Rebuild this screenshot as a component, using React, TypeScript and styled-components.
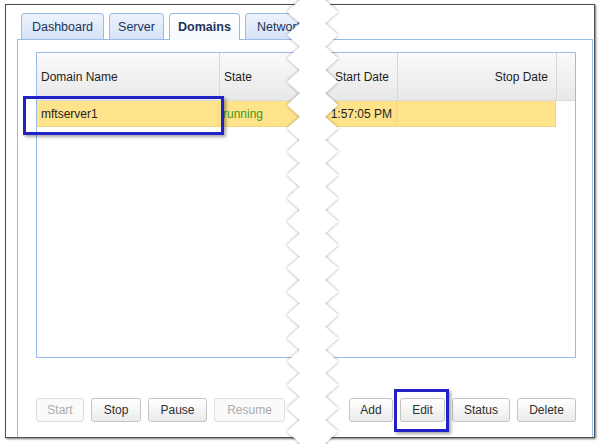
import React from "react";
import styled, { createGlobalStyle } from "styled-components";

const GlobalStyle = createGlobalStyle`
  html, body {
    margin: 0;
    padding: 0;
    background: #ffffff;
    font-family: "Liberation Sans", Arial, sans-serif;
  }
`;

const Page = styled.div`
  position: relative;
  width: 600px;
  height: 444px;
  overflow: hidden;
  background: #ffffff;
`;

const Frame = styled.div`
  box-sizing: border-box;
  width: 590px;
  height: 434px;
  margin: 4px 0 0 5px;
  padding: 8px 1px 0 11px;
  border: 1px solid #4f4f4f;
  box-shadow: 1px 1px 2px rgba(0, 0, 0, 0.55);
  display: flex;
  flex-direction: column;
  background: #ffffff;
`;

const TabStrip = styled.div`
  display: flex;
  align-items: flex-end;
  gap: 5px;
  height: 26px;
  padding-left: 4px;
`;

const Tab = styled.div<{ active?: boolean; w: number }>`
  box-sizing: border-box;
  width: ${(p) => p.w}px;
  height: ${(p) => (p.active ? "27px" : "26px")};
  margin-bottom: ${(p) => (p.active ? "-1px" : "0")};
  padding-bottom: ${(p) => (p.active ? "1px" : "0")};
  display: flex;
  align-items: center;
  justify-content: center;
  border: 1px solid #99bbe8;
  border-bottom: none;
  border-radius: 4px 4px 0 0;
  background: ${(p) =>
    p.active
      ? "linear-gradient(#ffffff, #f6f9fe)"
      : "linear-gradient(#edf3fc, #d4e3f7)"};
  color: #1d3359;
  font-size: 12.5px;
  font-weight: ${(p) => (p.active ? "bold" : "normal")};
  white-space: nowrap;
  overflow: hidden;
  position: relative;
  z-index: ${(p) => (p.active ? 1 : 0)};
`;

const Panel = styled.div`
  flex: 1;
  border: 1px solid #99bbe8;
  border-bottom: none;
  padding: 12px 16px 0 18px;
  display: flex;
  flex-direction: column;
`;

const Grid = styled.div`
  box-sizing: border-box;
  height: 306px;
  border: 1px solid #99bbe8;
  display: flex;
  flex-direction: column;
  font-size: 12px;
  color: #1e1e1e;
`;

const HeaderRow = styled.div`
  display: grid;
  grid-template-columns: 182px 100px 78px 159px 1fr;
  height: 48px;
  background: linear-gradient(#fafafa, #e8e8e8);
  border-bottom: 1px solid #dcdcdc;
  box-sizing: border-box;
`;

const HeaderCell = styled.div<{ right?: boolean; first?: boolean }>`
  display: flex;
  align-items: center;
  justify-content: ${(p) => (p.right ? "flex-end" : "flex-start")};
  padding: 1px ${(p) => (p.right ? "8px" : "4px")} 0 4px;
  border-left: ${(p) => (p.first ? "none" : "1px solid #d8d8d8")};
  white-space: nowrap;
`;

const DataRow = styled.div`
  display: grid;
  grid-template-columns: 182px 100px 78px 159px;
  height: 26px;
  box-sizing: border-box;
  width: 519px;
  background: #fee38b;
  border-bottom: 1px dotted #e9cf74;
`;

const DataCell = styled.div<{ right?: boolean; green?: boolean }>`
  display: flex;
  align-items: center;
  justify-content: ${(p) => (p.right ? "flex-end" : "flex-start")};
  padding: 1px 4px 0 4px;
  border-right: 1px dotted #e6cc78;
  color: ${(p) => (p.green ? "#3b9a1e" : "#1e1e1e")};
  white-space: nowrap;
  overflow: hidden;
`;

const ButtonBar = styled.div`
  display: flex;
  justify-content: space-between;
  margin-top: 40px;
`;

const ButtonGroup = styled.div`
  display: flex;
  gap: 7px;
`;

const Button = styled.div<{ w: number; disabled?: boolean }>`
  box-sizing: border-box;
  width: ${(p) => p.w}px;
  height: 24px;
  display: flex;
  align-items: center;
  justify-content: center;
  border: 1px solid ${(p) => (p.disabled ? "#dedede" : "#c4c4c4")};
  border-radius: 3px;
  background: ${(p) =>
    p.disabled ? "#fafafa" : "linear-gradient(#ffffff, #ebebeb)"};
  color: ${(p) => (p.disabled ? "#ababab" : "#303030")};
  font-size: 12px;
`;

const Highlight = styled.div<{ x: number; y: number; w: number; h: number }>`
  position: absolute;
  left: ${(p) => p.x}px;
  top: ${(p) => p.y}px;
  width: ${(p) => p.w}px;
  height: ${(p) => p.h}px;
  box-sizing: border-box;
  border: 3px solid #2121c6;
  box-shadow: 2px 2px 3px rgba(0, 0, 0, 0.35);
  z-index: 5;
`;

const TearSvg = styled.svg`
  position: absolute;
  left: 0;
  top: 0;
  z-index: 10;
  pointer-events: none;
`;

function Tear() {
  const period = 23.33;
  const start = 11.67 - period * 2;
  const left: string[] = [];
  const right: string[] = [];
  for (let y = start; y < 470; y += period) {
    left.push(`287,${y}`, `300,${y + period / 2}`);
    right.push(`338,${y}`, `325,${y + period / 2}`);
  }
  const points = [...left, ...right.reverse()].join(" ");
  return (
    <TearSvg width={600} height={444} viewBox="0 0 600 444">
      <defs>
        <filter id="tearShadow" x="-50%" y="-10%" width="200%" height="120%">
          <feDropShadow dx="0" dy="0" stdDeviation="1.6" floodColor="#000" floodOpacity="0.45" />
        </filter>
      </defs>
      <polygon points={points} fill="#ffffff" filter="url(#tearShadow)" />
    </TearSvg>
  );
}

export default function App() {
  return (
    <Page>
      <GlobalStyle />
      <Frame>
        <TabStrip>
          <Tab w={83}>Dashboard</Tab>
          <Tab w={55}>Server</Tab>
          <Tab w={71} active>Domains</Tab>
          <Tab w={70}>Network</Tab>
        </TabStrip>
        <Panel>
          <Grid>
            <HeaderRow>
              <HeaderCell first>Domain Name</HeaderCell>
              <HeaderCell>State</HeaderCell>
              <HeaderCell right>Start Date</HeaderCell>
              <HeaderCell right>Stop Date</HeaderCell>
              <HeaderCell />
            </HeaderRow>
            <DataRow>
              <DataCell>mftserver1</DataCell>
              <DataCell green>running</DataCell>
              <DataCell right>1:57:05 PM</DataCell>
              <DataCell right></DataCell>
            </DataRow>
          </Grid>
          <ButtonBar>
            <ButtonGroup>
              <Button w={48} disabled>Start</Button>
              <Button w={50}>Stop</Button>
              <Button w={59}>Pause</Button>
              <Button w={71} disabled>Resume</Button>
            </ButtonGroup>
            <ButtonGroup>
              <Button w={44}>Add</Button>
              <Button w={45}>Edit</Button>
              <Button w={58}>Status</Button>
              <Button w={59}>Delete</Button>
            </ButtonGroup>
          </ButtonBar>
        </Panel>
      </Frame>
      <Highlight x={23} y={96} w={201} h={39} />
      <Highlight x={394} y={389} w={55} h={43} />
      <Tear />
    </Page>
  );
}
